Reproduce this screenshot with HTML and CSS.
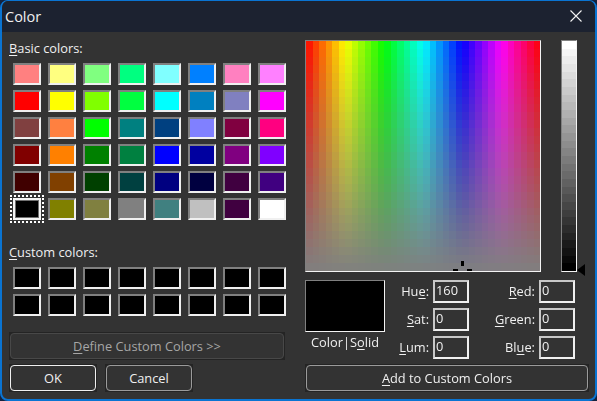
FILE: index.html
```html
<!DOCTYPE html>
<html lang="en">
<head>
    <meta charset="UTF-8">
    <title>Color</title>
    <link rel="stylesheet" href="styles.css">
</head>
<body>
    <div class="dialog">
        <div class="titlebar">
            <span class="title">Color</span>
            <svg class="close-icon" width="12" height="12" viewBox="0 0 12 12">
                <path d="M0.5 0.5L11.5 11.5M11.5 0.5L0.5 11.5" stroke="#f2f2f2" stroke-width="1.1" fill="none"/>
            </svg>
        </div>

        <div class="content">
            <div class="left-col">
                <div class="section-label"><u>B</u>asic colors:</div>
                <div class="swatches">
                    <div class="swatch c-ff8080"></div>
                    <div class="swatch c-ffff80"></div>
                    <div class="swatch c-80ff80"></div>
                    <div class="swatch c-00ff80"></div>
                    <div class="swatch c-80ffff"></div>
                    <div class="swatch c-0080ff"></div>
                    <div class="swatch c-ff80c0"></div>
                    <div class="swatch c-ff80ff"></div>

                    <div class="swatch c-ff0000"></div>
                    <div class="swatch c-ffff00"></div>
                    <div class="swatch c-80ff00"></div>
                    <div class="swatch c-00ff40"></div>
                    <div class="swatch c-00ffff"></div>
                    <div class="swatch c-0080c0"></div>
                    <div class="swatch c-8080c0"></div>
                    <div class="swatch c-ff00ff"></div>

                    <div class="swatch c-804040"></div>
                    <div class="swatch c-ff8040"></div>
                    <div class="swatch c-00ff00"></div>
                    <div class="swatch c-008080"></div>
                    <div class="swatch c-004080"></div>
                    <div class="swatch c-8080ff"></div>
                    <div class="swatch c-800040"></div>
                    <div class="swatch c-ff0080"></div>

                    <div class="swatch c-800000"></div>
                    <div class="swatch c-ff8000"></div>
                    <div class="swatch c-008000"></div>
                    <div class="swatch c-008040"></div>
                    <div class="swatch c-0000ff"></div>
                    <div class="swatch c-0000a0"></div>
                    <div class="swatch c-800080"></div>
                    <div class="swatch c-8000ff"></div>

                    <div class="swatch c-400000"></div>
                    <div class="swatch c-804000"></div>
                    <div class="swatch c-004000"></div>
                    <div class="swatch c-004040"></div>
                    <div class="swatch c-000080"></div>
                    <div class="swatch c-000040"></div>
                    <div class="swatch c-400040"></div>
                    <div class="swatch c-400080"></div>

                    <div class="swatch swatch-selected c-000000"></div>
                    <div class="swatch c-808000"></div>
                    <div class="swatch c-808040"></div>
                    <div class="swatch c-808080"></div>
                    <div class="swatch c-408080"></div>
                    <div class="swatch c-c0c0c0"></div>
                    <div class="swatch c-400040"></div>
                    <div class="swatch c-ffffff"></div>
                </div>

                <div class="section-label custom-label"><u>C</u>ustom colors:</div>
                <div class="swatches" id="customColors"></div>

                <button type="button" class="btn btn-define" disabled><span><u>D</u>efine Custom Colors &gt;&gt;</span></button>
                <div class="action-row">
                    <button type="button" class="btn btn-action btn-default"><span>OK</span></button>
                    <button type="button" class="btn btn-action"><span>Cancel</span></button>
                </div>
            </div>

            <div class="right-col">
                <div class="picker-row">
                    <div class="spectrum">
                        <canvas id="spectrum" width="234" height="230"></canvas>
                        <div class="cross cross-top"></div>
                        <div class="cross cross-left"></div>
                        <div class="cross cross-right"></div>
                    </div>
                    <div class="lum-bar">
                        <canvas id="lumBar" width="14" height="230"></canvas>
                    </div>
                    <div class="lum-arrow"></div>
                </div>

                <div class="values-row">
                    <div class="preview-box">
                        <div class="preview"></div>
                        <div class="preview-label">Color|S<u>o</u>lid</div>
                    </div>
                    <div class="fields">
                        <label>Hu<u>e</u>:</label><input type="text" value="160">
                        <label><u>R</u>ed:</label><input type="text" value="0">
                        <label><u>S</u>at:</label><input type="text" value="0">
                        <label><u>G</u>reen:</label><input type="text" value="0">
                        <label><u>L</u>um:</label><input type="text" value="0">
                        <label>Bl<u>u</u>e:</label><input type="text" value="0">
                    </div>
                </div>

                <button type="button" class="btn btn-add"><span><u>A</u>dd to Custom Colors</span></button>
            </div>
        </div>
    </div>

    <script src="script.js"></script>
</body>
</html>
```

FILE: styles.css
```css
* {
    margin: 0;
    padding: 0;
    box-sizing: border-box;
}

body {
    width: 597px;
    height: 401px;
    overflow: hidden;
    background: #14233f;
    font-family: "Open Sans", "Noto Sans", sans-serif;
    font-size: 12.8px;
    color: #f0f0f0;
}

u {
    text-underline-offset: 2px;
}

.dialog {
    width: 597px;
    height: 401px;
    border: 1px solid #0a74d2;
    border-left-width: 2px;
    border-right-width: 2px;
    border-bottom-width: 2px;
    border-radius: 8px;
    overflow: hidden;
    background: #333333;
}

.titlebar {
    height: 31px;
    display: flex;
    align-items: center;
    justify-content: space-between;
    padding: 0 13px 1px 3px;
    background: #1c2230;
}

.title {
    font-size: 14.5px;
}

.close-icon {
    display: block;
}

.content {
    display: flex;
    padding-top: 8px;
}

.left-col {
    width: 296px;
    margin-left: 7px;
}

.section-label {
    height: 17px;
    line-height: 17px;
    margin-bottom: 6px;
}

.custom-label {
    margin-top: 24px;
}

.swatches {
    display: grid;
    grid-template-columns: repeat(8, 28px);
    grid-auto-rows: 22px;
    column-gap: 7px;
    row-gap: 5px;
    margin-left: 4px;
}

.swatch {
    border: 2px solid;
    border-color: #808080 #f0f0f0 #f0f0f0 #808080;
    background: #000000;
}

.swatch-selected {
    border-color: #f4f4f4;
    box-shadow: inset 0 0 0 1px #707070;
    outline: 2px dotted #ffffff;
    outline-offset: 1px;
}

.c-ff8080 { background: #ff8080; }
.c-ffff80 { background: #ffff80; }
.c-80ff80 { background: #80ff80; }
.c-00ff80 { background: #00ff80; }
.c-80ffff { background: #80ffff; }
.c-0080ff { background: #0080ff; }
.c-ff80c0 { background: #ff80c0; }
.c-ff80ff { background: #ff80ff; }
.c-ff0000 { background: #ff0000; }
.c-ffff00 { background: #ffff00; }
.c-80ff00 { background: #80ff00; }
.c-00ff40 { background: #00ff40; }
.c-00ffff { background: #00ffff; }
.c-0080c0 { background: #0080c0; }
.c-8080c0 { background: #8080c0; }
.c-ff00ff { background: #ff00ff; }
.c-804040 { background: #804040; }
.c-ff8040 { background: #ff8040; }
.c-00ff00 { background: #00ff00; }
.c-008080 { background: #008080; }
.c-004080 { background: #004080; }
.c-8080ff { background: #8080ff; }
.c-800040 { background: #800040; }
.c-ff0080 { background: #ff0080; }
.c-800000 { background: #800000; }
.c-ff8000 { background: #ff8000; }
.c-008000 { background: #008000; }
.c-008040 { background: #008040; }
.c-0000ff { background: #0000ff; }
.c-0000a0 { background: #0000a0; }
.c-800080 { background: #800080; }
.c-8000ff { background: #8000ff; }
.c-400000 { background: #400000; }
.c-804000 { background: #804000; }
.c-004000 { background: #004000; }
.c-004040 { background: #004040; }
.c-000080 { background: #000080; }
.c-000040 { background: #000040; }
.c-400040 { background: #400040; }
.c-400080 { background: #400080; }
.c-000000 { background: #000000; }
.c-808000 { background: #808000; }
.c-808040 { background: #808040; }
.c-808080 { background: #808080; }
.c-408080 { background: #408080; }
.c-c0c0c0 { background: #c0c0c0; }
.c-ffffff { background: #ffffff; }

.btn {
    display: block;
    padding: 1px;
    border: none;
    background: #242424;
    font-family: inherit;
    font-size: inherit;
    color: #f0f0f0;
}

.btn span {
    display: flex;
    align-items: center;
    justify-content: center;
    height: 100%;
    white-space: pre;
    border: 1px solid #9b9b9b;
    border-radius: 4px;
    background: #333333;
}

.btn-define {
    width: 276px;
    height: 28px;
    margin-top: 16px;
    color: #a6a6a6;
}

.btn-define span {
    border-color: #484848;
}

.action-row {
    display: flex;
    gap: 8px;
    margin-top: 4px;
}

.btn-action {
    width: 88px;
    height: 28px;
}

.btn-default span {
    border-color: #f0f0f0;
}

.right-col {
    width: 288px;
}

.picker-row {
    display: flex;
    align-items: flex-start;
}

.spectrum {
    position: relative;
    width: 236px;
    height: 232px;
    border: 1px solid;
    border-color: #808080 #f4f4f4 #f4f4f4 #808080;
}

.spectrum canvas,
.lum-bar canvas {
    display: block;
}

.cross {
    position: absolute;
    background: #000000;
}

.cross-top {
    left: 155px;
    top: 220px;
    width: 3px;
    height: 5px;
}

.cross-left {
    left: 147px;
    top: 228px;
    width: 5px;
    height: 2px;
}

.cross-right {
    left: 161px;
    top: 228px;
    width: 5px;
    height: 2px;
}

.lum-bar {
    width: 16px;
    height: 232px;
    margin-left: 20px;
    border: 1px solid;
    border-color: #808080 #f4f4f4 #f4f4f4 #808080;
}

.lum-arrow {
    width: 0;
    height: 0;
    margin: 224px 0 -5px;
    border-top: 6.5px solid transparent;
    border-bottom: 6.5px solid transparent;
    border-right: 8px solid #000000;
}

.values-row {
    display: flex;
    margin-top: 8px;
}

.preview-box {
    width: 80px;
}

.preview {
    height: 52px;
    border: 1px solid;
    border-color: #808080 #f4f4f4 #f4f4f4 #808080;
    background: #000000;
}

.preview-label {
    line-height: 17px;
    margin-top: 2px;
    text-align: center;
}

.fields {
    display: grid;
    grid-template-columns: 44px 36px 62px 36px;
    grid-auto-rows: 23px;
    column-gap: 4px;
    row-gap: 5px;
}

.fields label {
    line-height: 23px;
    text-align: right;
}

.fields input {
    width: 36px;
    height: 23px;
    padding: 0 1px 3px;
    border: 2px solid;
    border-color: #c8c8c8 #f0f0f0 #f0f0f0 #c8c8c8;
    background: #333333;
    font-family: inherit;
    font-size: inherit;
    color: #f0f0f0;
    outline: none;
}

.btn-add {
    width: 284px;
    height: 28px;
    margin-top: 5px;
}
```

FILE: script.js
```js
// Windows style HSL (hue 0-239, sat 0-240, lum fixed at 120) drawn in coarse cells
function hueToRgb(h, s) {
    const hue = (h % 240) / 40;
    const x = 1 - Math.abs(hue % 2 - 1);
    let rgb;
    if (hue < 1) rgb = [1, x, 0];
    else if (hue < 2) rgb = [x, 1, 0];
    else if (hue < 3) rgb = [0, 1, x];
    else if (hue < 4) rgb = [0, x, 1];
    else if (hue < 5) rgb = [x, 0, 1];
    else rgb = [1, 0, x];

    return rgb.map(function(c) {
        const value = 0.5 + (c - 0.5) * s;
        return Math.round(value * 255);
    });
}

function drawSpectrum() {
    const canvas = document.getElementById('spectrum');
    const ctx = canvas.getContext('2d');
    const cols = 36;
    const rows = 29;

    for (let col = 0; col < cols; col++) {
        for (let row = 0; row < rows; row++) {
            const rgb = hueToRgb((col + 0.5) * 240 / cols, 1 - (row + 0.5) / rows);
            const x = Math.round(col * canvas.width / cols);
            const y = Math.round(row * canvas.height / rows);
            const x2 = Math.round((col + 1) * canvas.width / cols);
            const y2 = Math.round((row + 1) * canvas.height / rows);
            ctx.fillStyle = 'rgb(' + rgb.join(',') + ')';
            ctx.fillRect(x, y, x2 - x, y2 - y);
        }
    }
}

function drawLumBar() {
    const canvas = document.getElementById('lumBar');
    const ctx = canvas.getContext('2d');
    const rows = 30;

    for (let row = 0; row < rows; row++) {
        const gray = Math.round(255 * (1 - row / (rows - 1)));
        const y = Math.round(row * canvas.height / rows);
        const y2 = Math.round((row + 1) * canvas.height / rows);
        ctx.fillStyle = 'rgb(' + gray + ',' + gray + ',' + gray + ')';
        ctx.fillRect(0, y, canvas.width, y2 - y);
    }
}

function fillCustomColors() {
    const grid = document.getElementById('customColors');
    for (let i = 0; i < 16; i++) {
        const swatch = document.createElement('div');
        swatch.className = 'swatch';
        grid.appendChild(swatch);
    }
}

drawSpectrum();
drawLumBar();
fillCustomColors();
```
